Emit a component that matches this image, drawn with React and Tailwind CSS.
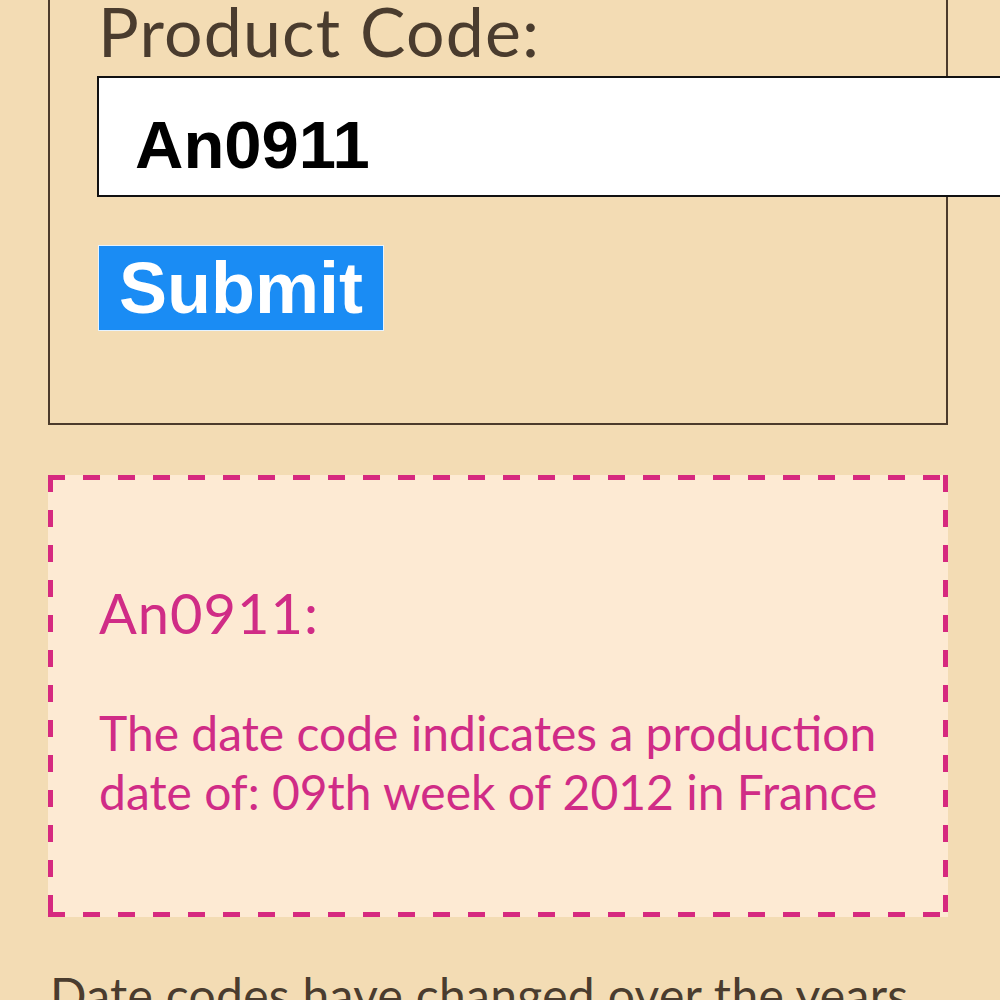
import React from "react";

// dashed outline drawn side by side so every side starts with a dash at its corner
function DashedFrame({ w, h, color }) {
  const s = 2.5;
  return (
    <svg className="absolute inset-0 pointer-events-none" width={w} height={h}>
      <g stroke={color} strokeWidth="5" strokeDasharray="17 18" fill="none">
        <path d={`M0 ${s} H${w}`} />
        <path d={`M0 ${h - s} H${w}`} />
        <path d={`M${s} 0 V${h}`} />
        <path d={`M${w - s} 0 V${h}`} />
      </g>
    </svg>
  );
}

function App() {
  return (
    <div
      className="w-[1000px] h-[1000px] overflow-hidden bg-[#f3dcb4] px-[48px] text-[#4a3c2e]"
      style={{ fontFamily: "Lato, 'Open Sans', sans-serif" }}
    >
      {/* lookup form */}
      <form
        onSubmit={(e) => e.preventDefault()}
        className="w-[900px] border-x-2 border-b-2 border-[#4b3b2b] pl-[48px] pb-[92px]"
      >
        <label htmlFor="productCode" className="block -mt-[3px] text-[68px] leading-none tracking-[1.2px]">
          Product Code:
        </label>
        <input
          id="productCode"
          type="text"
          readOnly
          value="An0911"
          className="block mt-[11px] -ml-px w-[960px] h-[121px] border-2 border-[#111] bg-white pl-[36px] pt-[16px] text-[67px] font-bold text-black outline-none"
          style={{ fontFamily: "'Liberation Sans', Arial, sans-serif" }}
        />
        <button
          type="submit"
          className="mt-[48px] flex w-[286px] h-[86px] items-center justify-center border border-[#e6f3ff] bg-[#1a8cf4] text-[72px] font-bold leading-none text-white"
          style={{ fontFamily: "'Liberation Sans', Arial, sans-serif" }}
        >
          Submit
        </button>
      </form>

      {/* result */}
      <div className="relative mt-[50px] w-[900px] h-[442px] bg-[#fdead3] pl-[51px] pt-[110px] text-[#d02c86]">
        <DashedFrame w={900} h={442} color="#d6297f" />
        <h3 className="text-[56px] leading-none tracking-[1px]">An0911:</h3>
        <p className="mt-[62px] text-[48px] leading-[59px]">
          The date code indicates a production
          <br />
          date of: 09th week of 2012 in France
        </p>
      </div>

      <p className="mt-[54px] pl-[2px] text-[48px] leading-none tracking-[0.3px] whitespace-nowrap">
        Date codes have changed over the years
      </p>
    </div>
  );
}

export default App;
